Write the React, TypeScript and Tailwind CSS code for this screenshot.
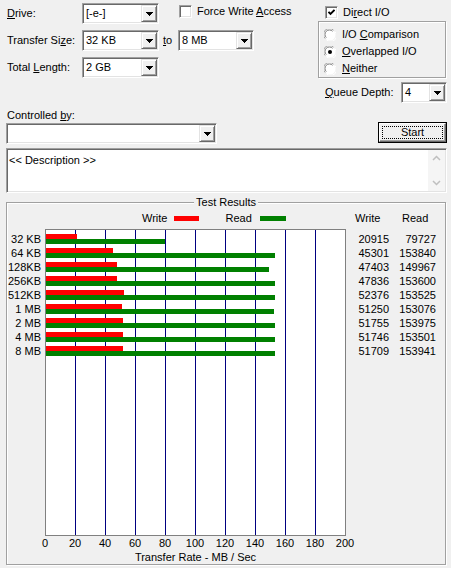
import React from "react";

const sunken =
  "border border-t-[#a0a0a0] border-l-[#a0a0a0] border-b-white border-r-white shadow-[inset_1px_1px_0_#696969,inset_-1px_-1px_0_#e3e3e3]";

function DropBtn() {
  return (
    <div className="w-[16px] h-full flex items-center justify-center bg-[#f0f0f0] border border-t-[#e3e3e3] border-l-[#e3e3e3] border-b-[#696969] border-r-[#696969] shadow-[inset_1px_1px_0_#ffffff,inset_-1px_-1px_0_#a0a0a0]">
      <svg width="7" height="4" viewBox="0 0 7 4" shapeRendering="crispEdges">
        <path d="M0 0H7L3.5 4Z" fill="#000" />
      </svg>
    </div>
  );
}

function Combo({ cls, value }: { cls: string; value: string }) {
  return (
    <div className={`flex h-[21px] bg-white p-[1px] ${sunken} ${cls}`}>
      <div className="flex-1 flex items-center pl-[2px] leading-none">{value}</div>
      <DropBtn />
    </div>
  );
}

function CheckBox({ checked }: { checked?: boolean }) {
  return (
    <div className={`w-[13px] h-[13px] bg-white flex items-center justify-center ${sunken}`}>
      {checked && (
        <svg width="7" height="7" viewBox="0 0 7 7">
          <path d="M0.5 2.8 L2.5 4.8 L6.5 0.8" stroke="#000" strokeWidth="1.9" fill="none" />
        </svg>
      )}
    </div>
  );
}

function Radio({ on }: { on?: boolean }) {
  return (
    <svg width="12" height="12" viewBox="0 0 12 12">
      <circle cx="6" cy="6" r="5.5" fill="#fff" />
      <path d="M1.2 9.5 A5.3 5.3 0 0 1 9.5 1.2" stroke="#a0a0a0" strokeWidth="1" fill="none" />
      <path d="M2.3 8.6 A4.2 4.2 0 0 1 8.6 2.3" stroke="#808080" strokeWidth="1" fill="none" />
      <path d="M10.8 2.5 A5.3 5.3 0 0 1 2.5 10.8" stroke="#ffffff" strokeWidth="1" fill="none" />
      {on && <circle cx="6" cy="6" r="2" fill="#000" />}
    </svg>
  );
}

const rows = [
  { label: "32 KB", w: 20915, r: 79727 },
  { label: "64 KB", w: 45301, r: 153840 },
  { label: "128KB", w: 47403, r: 149967 },
  { label: "256KB", w: 47836, r: 153600 },
  { label: "512KB", w: 52376, r: 153525 },
  { label: "1 MB", w: 51250, r: 153076 },
  { label: "2 MB", w: 51755, r: 153975 },
  { label: "4 MB", w: 51746, r: 153501 },
  { label: "8 MB", w: 51709, r: 153941 },
];

const ticks = ["0", "20", "40", "60", "80", "100", "120", "140", "160", "180", "200"];

export default function App() {
  return (
    <div className="w-[451px] h-[568px] overflow-hidden bg-[#f0f0f0] text-black text-[11px] leading-none font-['Liberation_Sans',Arial,sans-serif] pl-[6px] pr-[4px]">
      {/* top */}
      <div className="flex justify-between pt-[3px]">
        <div className="flex flex-col gap-[6px] pl-[1px]">
          <div className="flex items-center h-[21px]">
            <div className="w-[75px]">
              <span className="underline">D</span>rive:
            </div>
            <Combo cls="w-[77px]" value="[-e-]" />
            <div className="ml-[20px] flex items-center self-start mt-[2px]">
              <CheckBox />
              <span className="ml-[5px]">
                Force Write <span className="underline">A</span>ccess
              </span>
            </div>
          </div>
          <div className="flex items-center h-[21px]">
            <div className="w-[75px]">
              Transfer Si<span className="underline">z</span>e:
            </div>
            <Combo cls="w-[77px]" value="32 KB" />
            <div className="w-[19px] pl-[4px]">
              <span className="underline">t</span>o
            </div>
            <Combo cls="w-[76px]" value="8 MB" />
          </div>
          <div className="flex items-center h-[21px]">
            <div className="w-[75px]">
              Total <span className="underline">L</span>ength:
            </div>
            <Combo cls="w-[77px]" value="2 GB" />
          </div>
        </div>
        <div className="w-[129px] flex flex-col">
          <div className="flex items-center h-[14px] mt-[2px] pl-[7px]">
            <CheckBox checked />
            <span className="ml-[5px]">
              Di<span className="underline">r</span>ect I/O
            </span>
          </div>
          <div className="mt-[2px] h-[57px] w-[128px] border border-[#a0a0a0] shadow-[inset_1px_1px_0_#ffffff,1px_1px_0_#ffffff] pt-[4px] pl-[5px] flex flex-col">
            <div className="flex items-center h-[17px]">
              <Radio />
              <span className="ml-[6px]">
                I/O <span className="underline">C</span>omparison
              </span>
            </div>
            <div className="flex items-center h-[17px]">
              <Radio on />
              <span className="ml-[6px]">
                <span className="underline">O</span>verlapped I/O
              </span>
            </div>
            <div className="flex items-center h-[17px]">
              <Radio />
              <span className="ml-[6px]">
                <span className="underline">N</span>either
              </span>
            </div>
          </div>
          <div className="mt-[4px] flex items-center justify-between h-[21px] pl-[7px]">
            <span>
              <span className="underline">Q</span>ueue Depth:
            </span>
            <Combo cls="w-[46px]" value="4" />
          </div>
        </div>
      </div>

      {/* controlled by */}
      <div className="mt-[5px] h-[14px] flex items-center pl-[1px]">
        <span>
          Controlled <span className="underline">b</span>y:
        </span>
      </div>
      <div className="flex justify-between items-start">
        <Combo cls="w-[211px] mt-[1px]" value="" />
        <div className="w-[69px] h-[21px] border border-black bg-[#f0f0f0]">
          <div className="h-full w-full border border-t-white border-l-white border-b-[#696969] border-r-[#696969] shadow-[inset_-1px_-1px_0_#a0a0a0] p-[2px]">
            <div className="h-full w-full border border-dotted border-black flex items-center justify-center">
              Start
            </div>
          </div>
        </div>
      </div>

      {/* description */}
      <div className={`mt-[4px] h-[45px] w-[441px] bg-white flex ${sunken}`}>
        <div className="flex-1 pl-[2px] pt-[6px]">&lt;&lt; Description &gt;&gt;</div>
        <div className="w-[17px] my-[1px] mr-[1px] bg-[#f5f5f5] flex flex-col justify-between items-center py-[5px]">
          <svg width="9" height="6" viewBox="0 0 9 6">
            <path d="M1 5 L4.5 1.5 L8 5" stroke="#bfbfbf" strokeWidth="1.5" fill="none" />
          </svg>
          <svg width="9" height="6" viewBox="0 0 9 6">
            <path d="M1 1 L4.5 4.5 L8 1" stroke="#bfbfbf" strokeWidth="1.5" fill="none" />
          </svg>
        </div>
      </div>

      {/* test results */}
      <div className="relative mt-[9px] w-[440px] h-[363px] border border-[#a0a0a0] shadow-[inset_1px_1px_0_#ffffff,1px_1px_0_#ffffff]">
        <div className="absolute left-1/2 -translate-x-1/2 -top-[7px] bg-[#f0f0f0] px-[2px] leading-[13px]">
          Test Results
        </div>
        <div className="pt-[8px] flex h-[22px] items-stretch">
          <div className="w-[38px]" />
          <div className="w-[301px] flex items-center pl-[97px]">
            <span>Write</span>
            <div className="ml-[7px] w-[25px] h-[5px] bg-[#ff0000]" />
            <span className="ml-[26px]">Read</span>
            <div className="ml-[8px] w-[26px] h-[5px] bg-[#008000]" />
          </div>
          <div className="w-[43px] pl-[9px] flex items-center">Write</div>
          <div className="w-[47px] pl-[13px] flex items-center">Read</div>
        </div>
        <div className="mt-[4px] flex">
          <div className="w-[34px] mr-[4px] pt-[3px] flex flex-col">
            {rows.map((r) => (
              <div key={r.label} className="h-[14px] flex items-center justify-end">
                {r.label}
              </div>
            ))}
          </div>
          <div className="relative w-[301px] h-[307px] bg-white border border-[#808080]">
            <div className="absolute inset-0 flex">
              {ticks.slice(1).map((t, i) => (
                <div
                  key={t}
                  className={i < 9 ? "w-[30px] shrink-0 border-r border-[#000080]" : "flex-1"}
                />
              ))}
            </div>
            <div className="relative pt-[2px] flex flex-col">
              {rows.map((r) => (
                <div key={r.label} className="h-[14px] flex flex-col justify-center">
                  <div className="h-[5px] bg-[#ff0000]" style={{ width: Math.round((r.w / 1000) * 1.49) }} />
                  <div className="h-[5px] bg-[#008000]" style={{ width: Math.round((r.r / 1000) * 1.49) }} />
                </div>
              ))}
            </div>
          </div>
          <div className="w-[43px] pt-[3px] flex flex-col">
            {rows.map((r) => (
              <div key={r.label} className="h-[14px] flex items-center justify-end">
                {r.w}
              </div>
            ))}
          </div>
          <div className="w-[47px] pt-[3px] flex flex-col">
            {rows.map((r) => (
              <div key={r.label} className="h-[14px] flex items-center justify-end">
                {r.r}
              </div>
            ))}
          </div>
        </div>
        <div className="mt-[1px] ml-[23px] flex h-[13px]">
          {ticks.map((t) => (
            <div key={t} className="w-[30px] shrink-0 flex items-center justify-center">
              {t}
            </div>
          ))}
        </div>
        <div className="ml-[38px] w-[301px] h-[14px] flex items-center justify-center">
          Transfer Rate - MB / Sec
        </div>
      </div>
    </div>
  );
}
